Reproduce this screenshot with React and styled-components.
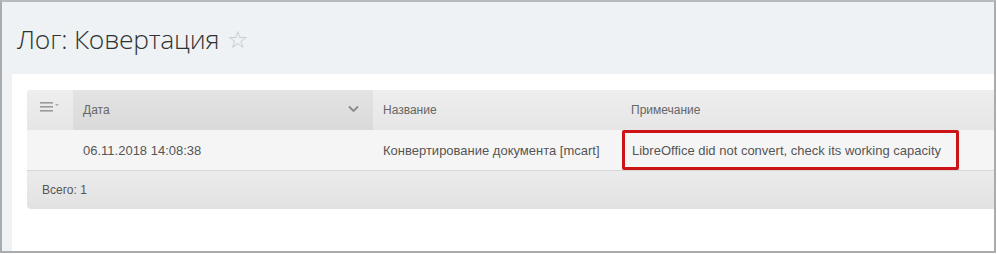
import React from "react";
import styled, { createGlobalStyle } from "styled-components";

const Global = createGlobalStyle`
  html, body { margin: 0; padding: 0; background: #ffffff; }
  body { font-family: "Liberation Sans", Arial, sans-serif; }
`;

const Frame = styled.div`
  width: 992px;
  height: 249px;
  border: 2px solid #a9acaf;
  border-top-color: #b8bbbe;
  background: #eef2f4;
  box-sizing: content-box;
  display: flex;
  flex-direction: column;
  overflow: hidden;
`;

const TitleBar = styled.div`
  height: 72px;
  display: flex;
  align-items: center;
  padding-left: 15px;
  gap: 8px;
`;

const Title = styled.h1`
  margin: 0;
  font-family: "Open Sans Light", "Open Sans", sans-serif;
  font-weight: 300;
  font-size: 26.5px;
  color: #2f3333;
  letter-spacing: -0.2px;
  padding-top: 2px;
`;

const Star = styled.span`
  font-size: 24px;
  color: #c3c6c9;
  padding-top: 4px;
`;

const Panel = styled.div`
  flex: 1;
  margin-left: 10px;
  background: #ffffff;
  padding: 16px 0 0 15px;
`;

const Table = styled.div`
  border-radius: 3px 0 0 3px;
  overflow: hidden;
  color: #555;
`;

const HeadRow = styled.div`
  display: flex;
  height: 40px;
  background: linear-gradient(#eeeeee, #e6e6e6);
`;

const HeadCell = styled.div`
  width: ${(p) => p.$w}px;
  flex: ${(p) => (p.$grow ? 1 : "none")};
  display: flex;
  align-items: center;
  padding-left: ${(p) => p.$pl || 0}px;
  box-sizing: border-box;
  font-size: 12px;
  color: #666;
  background: ${(p) => (p.$active ? "linear-gradient(#e3e3e3, #dadada)" : "transparent")};
  position: relative;
`;

const MenuSlot = styled.span`
  display: flex;
  margin-top: -6px;
`;

const Chevron = styled.span`
  position: absolute;
  right: 14px;
  top: 15px;
  display: flex;
`;

const BodyRow = styled.div`
  display: flex;
  height: 40px;
  background: #f5f5f5;
  border-bottom: 1px solid #d6d6d6;
`;

const Cell = styled.div`
  width: ${(p) => p.$w}px;
  flex: ${(p) => (p.$grow ? 1 : "none")};
  display: flex;
  align-items: center;
  padding-left: ${(p) => p.$pl || 0}px;
  box-sizing: border-box;
  font-size: 13px;
  color: #555;
  white-space: nowrap;
`;

const Highlight = styled.div`
  height: 40px;
  width: 337px;
  margin-left: 3px;
  border: 3px solid #cc1417;
  border-radius: 2px;
  box-sizing: border-box;
  display: flex;
  align-items: center;
  padding-left: 7px;
`;

const Footer = styled.div`
  height: 38px;
  display: flex;
  align-items: center;
  padding-left: 15px;
  font-size: 12px;
  color: #555;
  background: linear-gradient(#ebebeb, #e2e2e2);
  border-radius: 0 0 0 4px;
`;

const MenuIcon = () => (
  <svg width="22" height="12" viewBox="0 0 22 12">
    <rect x="0" y="1" width="13" height="1.6" fill="#9a9a9a" />
    <rect x="0" y="5" width="13" height="1.6" fill="#9a9a9a" />
    <rect x="0" y="9" width="13" height="1.6" fill="#9a9a9a" />
    <path d="M15 3 L19 3 L17 5 Z" fill="#aaaaaa" />
  </svg>
);

const ChevronIcon = () => (
  <svg width="11" height="8" viewBox="0 0 11 8">
    <path d="M1 1.5 L5.5 6 L10 1.5" fill="none" stroke="#8a8a8a" strokeWidth="1.8" />
  </svg>
);

export default function App() {
  return (
    <>
      <Global />
      <Frame>
        <TitleBar>
          <Title>Лог: Ковертация</Title>
          <Star>☆</Star>
        </TitleBar>
        <Panel>
          <Table>
            <HeadRow>
              <HeadCell $w={46} $pl={13}>
                <MenuSlot>
                  <MenuIcon />
                </MenuSlot>
              </HeadCell>
              <HeadCell $w={300} $pl={10} $active>
                Дата
                <Chevron>
                  <ChevronIcon />
                </Chevron>
              </HeadCell>
              <HeadCell $w={246} $pl={10}>Название</HeadCell>
              <HeadCell $grow $pl={12}>Примечание</HeadCell>
            </HeadRow>
            <BodyRow>
              <Cell $w={46} />
              <Cell $w={300} $pl={10}>06.11.2018 14:08:38</Cell>
              <Cell $w={246} $pl={10}>Конвертирование документа [mcart]</Cell>
              <Cell $grow>
                <Highlight>LibreOffice did not convert, check its working capacity</Highlight>
              </Cell>
            </BodyRow>
            <Footer>Всего: 1</Footer>
          </Table>
        </Panel>
      </Frame>
    </>
  );
}
